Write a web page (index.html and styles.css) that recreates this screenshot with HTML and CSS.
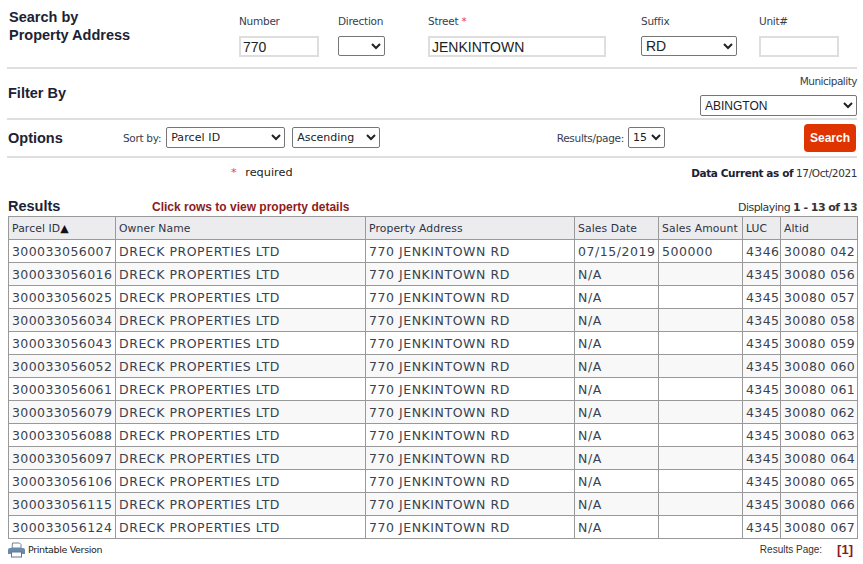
FILE: index.html
```html
<!DOCTYPE html>
<html lang="en">
<head>
<meta charset="utf-8">
<title>Search by Property Address</title>
<link rel="stylesheet" href="styles.css">
</head>
<body>
<div class="page">
  <section class="band band-address">
    <h2 class="title title-address">Search by<br>Property Address</h2>
    <div class="field f-number"><label>Number</label><input class="text" type="text" value="770"></div>
    <div class="field f-direction"><label>Direction</label><select class="sel sel-dir"><option></option></select></div>
    <div class="field f-street"><label>Street <span class="req">*</span></label><input class="text text-street" type="text" value="JENKINTOWN"></div>
    <div class="field f-suffix"><label>Suffix</label><select class="sel sel-suffix"><option>RD</option></select></div>
    <div class="field f-unit"><label>Unit#</label><input class="text" type="text"></div>
  </section>
  <section class="band band-filter">
    <h2 class="title">Filter By</h2>
    <div class="muni"><label>Municipality</label><select class="sel sel-muni"><option>ABINGTON</option></select></div>
  </section>
  <section class="band band-options">
    <h2 class="title title-options">Options</h2>
    <span class="opt-label opt-sort">Sort by:</span>
    <select class="sel sel-sort"><option>Parcel ID</option></select>
    <select class="sel sel-order"><option>Ascending</option></select>
    <span class="opt-label opt-results">Results/page:</span>
    <select class="sel sel-size"><option>15</option></select>
    <button class="search" type="button">Search</button>
  </section>
  <div class="status">
    <div class="required"><span class="req">*</span> required</div>
    <div class="current"><b>Data Current as of</b> 17/Oct/2021</div>
  </div>
  <div class="results-head">
    <h2 class="title">Results</h2>
    <span class="hint">Click rows to view property details</span>
    <span class="count">Displaying <b>1 - 13 of 13</b></span>
  </div>
  <table class="grid">
    <colgroup><col class="c1"><col class="c2"><col class="c3"><col class="c4"><col class="c5"><col class="c6"><col class="c7"></colgroup>
    <thead><tr><th>Parcel ID<span class="arrow">▲</span></th><th>Owner Name</th><th>Property Address</th><th>Sales Date</th><th>Sales Amount</th><th>LUC</th><th>Altid</th></tr></thead>
    <tbody>
      <tr><td>300033056007</td><td>DRECK PROPERTIES LTD</td><td>770 JENKINTOWN RD</td><td>07/15/2019</td><td>500000</td><td>4346</td><td>30080 042</td></tr>
      <tr><td>300033056016</td><td>DRECK PROPERTIES LTD</td><td>770 JENKINTOWN RD</td><td>N/A</td><td></td><td>4345</td><td>30080 056</td></tr>
      <tr><td>300033056025</td><td>DRECK PROPERTIES LTD</td><td>770 JENKINTOWN RD</td><td>N/A</td><td></td><td>4345</td><td>30080 057</td></tr>
      <tr><td>300033056034</td><td>DRECK PROPERTIES LTD</td><td>770 JENKINTOWN RD</td><td>N/A</td><td></td><td>4345</td><td>30080 058</td></tr>
      <tr><td>300033056043</td><td>DRECK PROPERTIES LTD</td><td>770 JENKINTOWN RD</td><td>N/A</td><td></td><td>4345</td><td>30080 059</td></tr>
      <tr><td>300033056052</td><td>DRECK PROPERTIES LTD</td><td>770 JENKINTOWN RD</td><td>N/A</td><td></td><td>4345</td><td>30080 060</td></tr>
      <tr><td>300033056061</td><td>DRECK PROPERTIES LTD</td><td>770 JENKINTOWN RD</td><td>N/A</td><td></td><td>4345</td><td>30080 061</td></tr>
      <tr><td>300033056079</td><td>DRECK PROPERTIES LTD</td><td>770 JENKINTOWN RD</td><td>N/A</td><td></td><td>4345</td><td>30080 062</td></tr>
      <tr><td>300033056088</td><td>DRECK PROPERTIES LTD</td><td>770 JENKINTOWN RD</td><td>N/A</td><td></td><td>4345</td><td>30080 063</td></tr>
      <tr><td>300033056097</td><td>DRECK PROPERTIES LTD</td><td>770 JENKINTOWN RD</td><td>N/A</td><td></td><td>4345</td><td>30080 064</td></tr>
      <tr><td>300033056106</td><td>DRECK PROPERTIES LTD</td><td>770 JENKINTOWN RD</td><td>N/A</td><td></td><td>4345</td><td>30080 065</td></tr>
      <tr><td>300033056115</td><td>DRECK PROPERTIES LTD</td><td>770 JENKINTOWN RD</td><td>N/A</td><td></td><td>4345</td><td>30080 066</td></tr>
      <tr><td>300033056124</td><td>DRECK PROPERTIES LTD</td><td>770 JENKINTOWN RD</td><td>N/A</td><td></td><td>4345</td><td>30080 067</td></tr>
    </tbody>
  </table>
  <div class="foot">
    <div class="print">
      <svg class="print-icon" viewBox="0 0 17 16" width="17" height="16" aria-hidden="true">
        <path d="M4.5 1h7l1.5 1.5V6H4z" fill="#fff" stroke="#6f8397"/>
        <path d="M2 6h13a2 2 0 0 1 2 2v4h-3v-2H3v2H0V8a2 2 0 0 1 2-2z" fill="#6b89a8"/>
        <rect x="3.5" y="10" width="10" height="5" fill="#fff" stroke="#5d7892"/>
      </svg>
      <span>Printable Version</span>
    </div>
    <div class="pager"><span class="pager-label">Results Page:</span><span class="pager-num">[1]</span></div>
  </div>
</div>
</body>
</html>
```
FILE: styles.css
```css
* { box-sizing: border-box; }
html, body { margin: 0; padding: 0; background: #fff; }
body { font-family: "DejaVu Sans", Verdana, sans-serif; color: #222; overflow: hidden; }
.page { position: relative; width: 863px; height: 564px; padding: 0 6px 0 7px; }
.title { margin: 0; font: bold 14.5px/18px "Liberation Sans", Arial, sans-serif; color: #1c2233; }
label { display: block; font: 10.5px/14px "DejaVu Sans", Verdana, sans-serif; color: #36404f; letter-spacing: -.25px; }
.req { color: #e8413a; }
.band { border-bottom: 2px solid #dfdfdf; display: flex; }

.band-address { height: 69px; padding-top: 9px; }
.title-address { width: 232px; padding-left: 2px; line-height: 17.5px; }
.field { padding-top: 5px; }
.field label { height: 15px; margin-bottom: 7px; }
.f-number { width: 99px; }
.f-direction { width: 90px; }
.f-street { width: 213px; }
.f-suffix { width: 118px; }
.text { display: block; width: 80px; height: 21px; border: 2px solid #dedede; padding: 0 2px; font: 14px "Liberation Sans", Arial, sans-serif; color: #222; background: #fff; outline: 0; }
.text-street { width: 178px; }
.sel { display: block; height: 20px; border: 1px solid #767676; border-radius: 2px; background: #fff; color: #222; padding: 0; font: 11px "DejaVu Sans", Verdana, sans-serif; }
.sel-dir { width: 47px; margin-top: 1px; }
.sel-suffix { width: 96px; margin-top: 1px; font: 14px "Liberation Sans", Arial, sans-serif; }

.band-filter { height: 51px; justify-content: space-between; }
.band-filter .title { padding: 15px 0 0 1px; }
.muni { padding-top: 5px; }
.muni label { text-align: right; height: 21px; letter-spacing: -.5px; }
.sel-muni { width: 157px; height: 21px; font: 12px "Liberation Sans", Arial, sans-serif; }

.band-options { height: 38px; align-items: center; padding-bottom: 1px; }
.title-options { width: 116px; padding-left: 1px; }
.opt-label { font: 10.5px "DejaVu Sans", Verdana, sans-serif; color: #36404f; letter-spacing: -.3px; margin-right: 4px; }
.opt-sort { margin-right: 5px; }
.sel-sort { width: 119px; height: 21px; margin-right: 7px; letter-spacing: .1px; }
.sel-order { width: 88px; height: 21px; }
.opt-results { margin-left: auto; }
.sel-size { width: 37px; height: 21px; margin-right: 192px; }
.search { position: absolute; left: 804px; top: 124px; width: 52px; height: 28px; border: 0; border-radius: 4px; background: #e03400; color: #fff; font: bold 12px "Liberation Sans", Arial, sans-serif; padding: 0; }

.status { display: flex; justify-content: space-between; height: 35px; padding: 7px 0 0 224px; }
.required { font: 11.3px/16px "DejaVu Sans", Verdana, sans-serif; }
.required .req { margin-right: 5px; }
.current { font: 10.5px/16px "DejaVu Sans", Verdana, sans-serif; letter-spacing: -.4px; color: #333; }
.current b { color: #1c2233; }

.results-head { display: flex; align-items: baseline; height: 23px; padding-top: 4px; }
.results-head .title { width: 145px; padding-left: 1px; }
.hint { font: bold 12px "Liberation Sans", Arial, sans-serif; color: #8c1c1c; }
.count { margin-left: auto; font: 11px "DejaVu Sans", Verdana, sans-serif; letter-spacing: -.55px; color: #333; }

.grid { border-collapse: collapse; table-layout: fixed; width: 849px; margin-left: 1px; font-size: 12.5px; letter-spacing: .55px; }
.c1 { width: 107px; } .c2 { width: 250px; } .c3 { width: 209px; } .c4 { width: 84px; } .c5 { width: 84px; } .c6 { width: 38px; } .c7 { width: 77px; }
.grid th, .grid td { border: 1px solid #999; height: 23px; padding: 0 3px; text-align: left; white-space: nowrap; overflow: hidden; color: #3a4250; }
.grid td:nth-child(1), .grid td:nth-child(6), .grid td:nth-child(7) { letter-spacing: .4px; }
.grid th { background: #ececef; font-weight: normal; font-size: 10.8px; letter-spacing: .1px; color: #2c3444; }
.grid tbody tr:nth-child(even) td { background: #f8f8f8; }
.arrow { color: #111; font-size: 11px; }

.foot { display: flex; justify-content: space-between; align-items: center; height: 21px; }
.print { display: flex; align-items: center; gap: 3px; padding-left: 1px; font: 9.5px "DejaVu Sans", Verdana, sans-serif; color: #222; letter-spacing: -.35px; }
.pager { display: flex; align-items: center; padding-right: 4px; }
.pager-label { font: 10px "Liberation Sans", Arial, sans-serif; color: #333; margin-right: 15px; }
.pager-num { font: bold 13px "Liberation Sans", Arial, sans-serif; color: #8c1c1c; }
```
